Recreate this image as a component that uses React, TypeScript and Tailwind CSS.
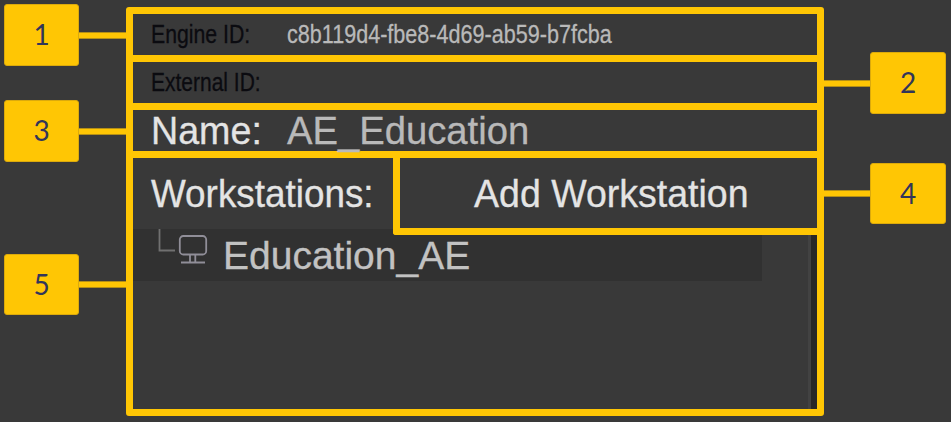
import type { ReactNode } from "react";

function Badge({ label, side, className }: { label: string; side: "left" | "right"; className: string }) {
  const box = (
    <div
      className={`flex h-full shrink-0 items-center justify-center rounded-[3px] border border-[#dcaa0c] bg-[#ffc604] pb-[2px] font-[Lato,sans-serif] text-[28px] leading-none text-[#32355a] ${
        side === "left" ? "w-[75px]" : "w-[76px]"
      }`}
    >
      {label}
    </div>
  );
  const line = <div className="h-[7px] grow border-y border-[#b48f16] bg-[#ffc604]" />;
  return (
    <div className={`flex shrink-0 items-center ${className}`}>
      {side === "left" ? box : line}
      {side === "left" ? line : box}
    </div>
  );
}

function Text({ className = "", children }: { className?: string; children: ReactNode }) {
  return (
    <span className={`block origin-left whitespace-pre [-webkit-text-stroke:0.3px_currentColor] ${className}`}>
      {children}
    </span>
  );
}

export default function App() {
  return (
    <div className="flex h-[422px] w-[951px] overflow-hidden bg-[#393939] font-['Liberation_Sans',Arial,sans-serif]">
      <div className="flex w-[126px] shrink-0 flex-col pl-1 pt-1">
        <Badge label="1" side="left" className="h-[62px]" />
        <Badge label="3" side="left" className="mt-[34px] h-[62px]" />
        <Badge label="5" side="left" className="mt-[92px] h-[61px]" />
      </div>

      <main className="mt-[7px] flex h-[409px] w-[698px] shrink-0 flex-col rounded-[3px] border-[7px] border-[#ffc604]">
        <div className="flex h-12 shrink-0 items-center border-b-[7px] border-[#ffc604] pl-[18px] text-[25px] leading-none">
          <div className="w-[136px]">
            <Text className="scale-x-[0.85] text-[#0b0b10]">Engine ID:</Text>
          </div>
          <Text className="scale-x-[0.863] text-[#b9b9b9]">c8b119d4-fbe8-4d69-ab59-b7fcba</Text>
        </div>
        <div className="flex h-12 shrink-0 items-center border-b-[7px] border-[#ffc604] pl-[18px] text-[25px] leading-none">
          <Text className="scale-x-[0.84] text-[#0b0b10]">External ID:</Text>
        </div>
        <div className="flex h-12 shrink-0 items-center border-b-[7px] border-[#ffc604] pl-[16px] text-[39px] leading-none">
          <div className="w-[138px] pl-[2px]">
            <Text className="scale-x-[0.965] text-[#e4e4e4]">Name:</Text>
          </div>
          <Text className="scale-x-[0.98] text-[#b9b9b9]">AE_Education</Text>
        </div>

        <div className="flex h-[71px] shrink-0 text-[39px] leading-none text-[#e4e4e4]">
          <div className="flex w-[260px] items-center pl-[18px]">
            <Text className="scale-x-[0.945]">Workstations:</Text>
          </div>
          <button className="z-10 flex h-[77px] w-[424px] shrink-0 items-center rounded-bl-[3px] border-b-[7px] border-l-[7px] border-[#ffc604] bg-[#393939] pl-[74px]">
            <Text className="scale-x-[0.962]">Add Workstation</Text>
          </button>
        </div>

        <div className="flex grow">
          <div className="w-[675px]">
            <div className="flex h-[52px] w-[629px] bg-[#313131]">
              <svg width="90" height="52" viewBox="0 0 90 52" fill="none" className="shrink-0">
                <path d="M26.5 0V21.5H42" stroke="#707070" strokeWidth="1.8" />
                <g stroke="#908e98" strokeWidth="1.8">
                  <rect x="46.8" y="7" width="26.4" height="18.5" rx="3.5" />
                  <path d="M57 25.5V33M62.3 25.5V33M48 33.5H72" />
                </g>
              </svg>
              <div className="flex items-center text-[39px] leading-none text-[#c2c2c2]">
                <Text>Education_AE</Text>
              </div>
            </div>
          </div>
          <div className="w-[9px] border-l-[3px] border-[#424242] bg-[#272727]" />
        </div>
      </main>

      <div className="flex grow flex-col pr-[5px] pt-[52px]">
        <Badge label="2" side="right" className="h-[62px]" />
        <Badge label="4" side="right" className="mt-[49px] h-[61px]" />
      </div>
    </div>
  );
}
